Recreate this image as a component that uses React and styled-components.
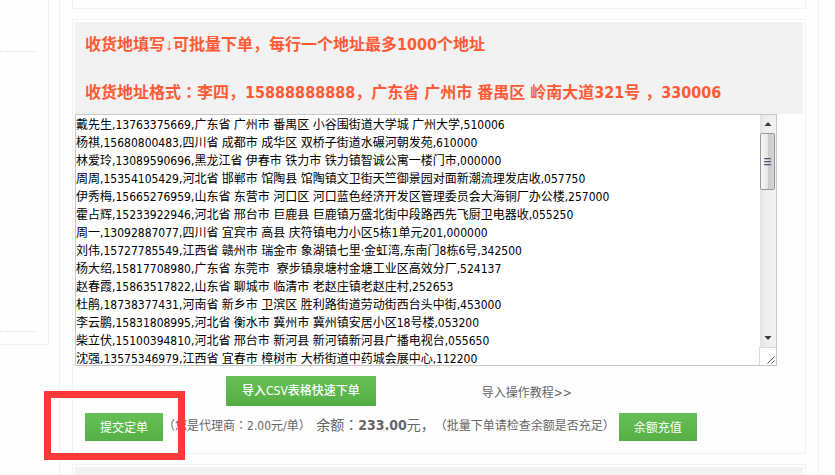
import React from "react";
import styled, { createGlobalStyle } from "styled-components";

const latin = '"DejaVu Sans Condensed", "DejaVu Sans"';

const GlobalStyle = createGlobalStyle`
  *, *::before, *::after { box-sizing: border-box; }
  body {
    margin: 0;
    background: #fefefe;
    color: #666;
    font: 12px/18px ${latin}, "Noto Sans CJK SC", sans-serif;
    text-spacing-trim: space-all;
  }
`;

const Page = styled.div`
  display: grid;
  grid-template-columns: 49px minmax(0, 1fr);
  column-gap: 10px;
  min-height: 100vh;
  padding-right: 16px;
`;

const Sidebar = styled.aside`
  align-self: start;
  padding: 0 12px 12px 0;
  border: solid #f2f2f2;
  border-width: 0 1px 1px 0;
`;

const SidebarSection = styled.div`
  height: ${(p) => (p.$tall ? 280 : 52)}px;
  border-bottom: 1px dotted #dcdcdc;
`;

const Main = styled.main`
  display: flex;
  flex-direction: column;
  gap: 10px;
  padding: 0 12px;
  border: solid #f2f2f2;
  border-width: 0 1px;
`;

const Card = styled.section`
  padding: 2px 2px 12px;
  border: 1px solid #f2f2f2;
`;

const PreviousCard = styled(Card)`
  height: 9px;
  padding: 0;
  border-top: 0;
`;

const NextCard = styled(Card)`
  display: flex;
  flex: 1;
  padding-bottom: 0;
  border-bottom: 0;
`;

const NextHeader = styled.div`
  flex: 1;
  background: #f2f2f2;
`;

const Header = styled.header`
  display: grid;
  grid-auto-rows: 24px;
  gap: 24px;
  padding: 11px 10px 9px;
  background: #f2f2f2;
`;

const Heading = styled.label`
  color: #ff5a36;
  font-size: 16px;
  font-weight: bold;
  line-height: 24px;
  white-space: pre;
`;

const Mark = styled.span.attrs({ lang: "zh-Hant" })`
  font-family: "Noto Sans CJK TC", sans-serif;
  line-height: 1;
`;

const Arrow = styled.span`
  font-family: "Liberation Sans", sans-serif;
  line-height: 1;
`;

const Field = styled.div`
  display: flex;
  height: 252px;
  margin-right: 26px;
  border: 1px solid #c8c8c8;
  background: #fff;
`;

const Addresses = styled.textarea`
  flex: 1;
  min-width: 0;
  margin: 0;
  padding: 1px 0 0;
  border: 0;
  outline: 0;
  resize: none;
  overflow: hidden;
  background: transparent;
  color: #000;
  font: inherit;
  white-space: pre;
`;

const Scroller = styled.div`
  display: flex;
  flex-direction: column;
  width: 16px;
`;

const Track = styled.div`
  flex: 1;
  display: flex;
  flex-direction: column;
  align-items: center;
  background: linear-gradient(to right, #e2e2e2, #ececec 4px, #f1f1f1 12px);
`;

const ArrowButton = styled.span`
  display: grid;
  place-items: center;
  width: 16px;
  height: 18px;
`;

const Thumb = styled.span`
  display: grid;
  place-items: center;
  width: 15px;
  height: 57px;
  margin-right: 1px;
  margin-bottom: auto;
  border: 1px solid #979797;
  border-radius: 2px;
  background: linear-gradient(to right, #f7f7f7, #e6e6e6 50%, #cbcbcb 55%, #d6d6d6);
`;

const Corner = styled.div`
  display: grid;
  place-items: end;
  width: 17px;
  height: 18px;
  margin-left: -1px;
  padding: 1px;
  border: solid #dcdcdc;
  border-width: 1px 0 0 1px;
  background: #fff;
`;

const ImportRow = styled.div`
  display: flex;
  align-items: center;
  gap: 106px;
  margin-top: 10px;
  padding-left: 151px;
`;

const Button = styled.button`
  height: 28px;
  padding: 2px 15px 0;
  border: 0;
  background: linear-gradient(#66c056, #56b046);
  color: #fff;
  font: inherit;
  white-space: nowrap;
  cursor: pointer;
`;

const ImportButton = styled(Button)`
  height: 30px;
  padding: 2px 16px 0;
  border-bottom: 2px solid #52b043;
  font-weight: 500;
`;

const GuideLink = styled.a`
  padding-top: 4px;
  color: #666;
  text-decoration: none;
`;

const SubmitRow = styled.div`
  display: flex;
  align-items: center;
  height: 28px;
  margin-top: 7px;
  padding-left: 10px;
  white-space: nowrap;
`;

const Highlight = styled.div`
  position: relative;
  display: flex;

  &::after {
    content: "";
    position: absolute;
    inset: -22px -22px -19px -41px;
    border: 7px solid #fd3a3a;
    pointer-events: none;
  }
`;

const Status = styled.p`
  margin: 0 4px 0 0;
  padding-bottom: 4px;
  line-height: 24px;
`;

const Balance = styled.span`
  margin-left: 2px;
  font-size: 14px;
`;

const marks = { "：": Mark, "（": Mark, "）": Mark, "↓": Arrow };

function Text({ children }) {
  return children.split(/([：（）↓])/).map((part, i) => {
    const Glyph = marks[part];
    return Glyph ? <Glyph key={i}>{part}</Glyph> : part;
  });
}

const orders = [
  "戴先生,13763375669,广东省 广州市 番禺区 小谷围街道大学城 广州大学,510006",
  "杨祺,15680800483,四川省 成都市 成华区 双桥子街道水碾河朝发苑,610000",
  "林爱玲,13089590696,黑龙江省 伊春市 铁力市 铁力镇智诚公寓一楼门市,000000",
  "周周,15354105429,河北省 邯郸市 馆陶县 馆陶镇文卫街天竺御景园对面新潮流理发店收,057750",
  "伊秀梅,15665276959,山东省 东营市 河口区 河口蓝色经济开发区管理委员会大海铜厂办公楼,257000",
  "霍占辉,15233922946,河北省 邢台市 巨鹿县 巨鹿镇万盛北街中段路西先飞厨卫电器收,055250",
  "周一,13092887077,四川省 宜宾市 高县 庆符镇电力小区5栋1单元201,000000",
  "刘伟,15727785549,江西省 赣州市 瑞金市 象湖镇七里·金虹湾,东南门8栋6号,342500",
  "杨大绍,15817708980,广东省 东莞市  寮步镇泉塘村金塘工业区高效分厂,524137",
  "赵春霞,15863517822,山东省 聊城市 临清市 老赵庄镇老赵庄村,252653",
  "杜鹃,18738377431,河南省 新乡市 卫滨区 胜利路街道劳动街西台头中街,453000",
  "李云鹏,15831808995,河北省 衡水市 冀州市 冀州镇安居小区18号楼,053200",
  "柴立伏,15100394810,河北省 邢台市 新河县 新河镇新河县广播电视台,055650",
  "沈强,13575346979,江西省 宜春市 樟树市 大桥街道中药城会展中心,112200",
].join("\n");

export default function App() {
  return (
    <Page lang="zh-CN">
      <GlobalStyle />
      <Sidebar>
        <SidebarSection />
        <SidebarSection $tall />
      </Sidebar>
      <Main>
        <PreviousCard />
        <Card>
          <Header>
            <Heading htmlFor="addresses">
              <Text>收货地填写↓可批量下单，每行一个地址最多1000个地址</Text>
            </Heading>
            <Heading htmlFor="addresses">
              <Text>收货地址格式：李四，15888888888，广东省 广州市 番禺区 岭南大道321号 ，330006</Text>
            </Heading>
          </Header>
          <Field>
            <Addresses id="addresses" defaultValue={orders} spellCheck={false} />
            <Scroller aria-hidden="true">
              <Track>
                <ArrowButton>
                  <svg width="8" height="4" viewBox="0 0 8 4"><path d="M4 0L7.5 4H.5z" fill="#3b3548" /></svg>
                </ArrowButton>
                <Thumb>
                  <svg width="8" height="8" viewBox="0 0 8 8">
                    <path d="M0 .5h7M0 3.5h7M0 6.5h7" stroke="#5c5870" />
                    <path d="M1 1.5h7M1 4.5h7M1 7.5h7" stroke="#b9b9c4" />
                  </svg>
                </Thumb>
                <ArrowButton>
                  <svg width="8" height="4" viewBox="0 0 8 4"><path d="M.5 0h7L4 4z" fill="#3b3548" /></svg>
                </ArrowButton>
              </Track>
              <Corner>
                <svg width="8" height="8" viewBox="0 0 8 8">
                  <path d="M.5 7.5l7-7M4.5 7.5l3-3" stroke="#555" strokeWidth="1" />
                </svg>
              </Corner>
            </Scroller>
          </Field>
          <ImportRow>
            <ImportButton type="button">导入CSV表格快速下单</ImportButton>
            <GuideLink href="#guide">导入操作教程&gt;&gt;</GuideLink>
          </ImportRow>
          <SubmitRow>
            <Highlight>
              <Button type="submit">提交定单</Button>
            </Highlight>
            <Status>
              <Text>（您是代理商：2.00元/单）</Text>{" "}
              <Balance>
                <Text>余额：</Text>
                <b>233.00</b>
                <Text>元，</Text>
              </Balance>
              <Text>（批量下单请检查余额是否充足）</Text>
            </Status>
            <Button type="button">余额充值</Button>
          </SubmitRow>
        </Card>
        <NextCard>
          <NextHeader />
        </NextCard>
      </Main>
    </Page>
  );
}
